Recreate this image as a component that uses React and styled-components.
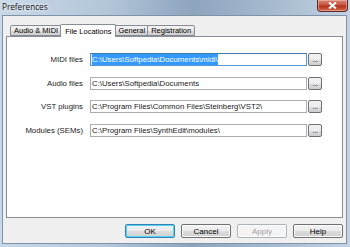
import React from "react";
import styled, { createGlobalStyle } from "styled-components";

const GlobalStyle = createGlobalStyle`
  html, body {
    margin: 0;
    padding: 0;
    background: #8aa3bd;
  }
  * {
    box-sizing: border-box;
  }
`;

const Window = styled.div`
  width: 350px;
  height: 247px;
  display: flex;
  flex-direction: column;
  background: linear-gradient(90deg, #c9d8e8 0%, #b4c6da 30%, #8ea5be 55%, #a9bcd1 80%, #c2d2e3 100%);
  font-family: "Liberation Sans", Arial, sans-serif;
  font-size: 7.8px;
  color: #000;
  overflow: hidden;
`;

const TitleBar = styled.div`
  height: 15px;
  display: flex;
  align-items: flex-start;
  justify-content: space-between;
  padding-left: 2px;
  padding-right: 2px;
`;

const Title = styled.div`
  font-family: "Open Sans", "Liberation Sans", sans-serif;
  font-size: 8.2px;
  line-height: 14px;
  color: #111;
  text-shadow: 0 0 6px rgba(255, 255, 255, 0.9), 0 0 3px rgba(255, 255, 255, 0.9);
`;

const CloseButton = styled.div`
  width: 31px;
  height: 12px;
  display: flex;
  align-items: center;
  justify-content: center;
  border: 1px solid #5c2a24;
  border-top: none;
  border-radius: 0 0 4px 4px;
  background: linear-gradient(180deg, #d58878 0%, #c8533f 45%, #b0321d 55%, #d46b4f 100%);
  box-shadow: inset 0 0 0 1px rgba(255, 200, 190, 0.5);
`;

const Client = styled.div`
  flex: 1;
  display: flex;
  flex-direction: column;
  margin: 0 3px 3px 2px;
  padding: 8px 3px 5px 3px;
  background: #f0f0f0;
  border: 1px solid #7f93a8;
`;

const TabStrip = styled.div`
  display: flex;
  align-items: flex-end;
  height: 12px;
  padding-left: 4px;
  position: relative;
  z-index: 1;
`;

const Tab = styled.div`
  height: ${({ $active }) => ($active ? "13px" : "11px")};
  margin-bottom: ${({ $active }) => ($active ? "-1px" : "0")};
  padding: ${({ $active }) => ($active ? "0 4px" : "0 3px")};
  display: flex;
  align-items: center;
  border: 1px solid #898c95;
  border-bottom: ${({ $active }) => ($active ? "none" : "1px solid #898c95")};
  border-radius: 2px 2px 0 0;
  background: ${({ $active }) =>
    $active ? "#ffffff" : "linear-gradient(180deg, #f3f3f3 0%, #ebebeb 50%, #dddddd 51%, #cfcfcf 100%)"};
  font-size: 7.5px;
  line-height: 9px;
  white-space: nowrap;
  position: relative;
  z-index: ${({ $active }) => ($active ? 2 : 1)};
  & + & {
    margin-left: ${({ $active }) => ($active ? "-2px" : "-1px")};
  }
`;

const Panel = styled.div`
  flex: 1;
  background: #ffffff;
  border: 1px solid #898c95;
  padding-top: 16px;
  display: grid;
  grid-template-columns: 76px 217px 14px;
  grid-auto-rows: 13px;
  column-gap: 7px;
  row-gap: 10.5px;
  align-content: start;
`;

const Label = styled.div`
  text-align: right;
  line-height: 13px;
  white-space: nowrap;
  color: #1a1a1a;
`;

const PathInput = styled.div`
  height: 13px;
  border: 1px solid ${({ $focused }) => ($focused ? "#5897d5" : "#abadb3")};
  border-top-color: ${({ $focused }) => ($focused ? "#3d7bad" : "#abadb3")};
  background: #ffffff;
  padding-left: 1px;
  display: flex;
  align-items: center;
  overflow: hidden;
  white-space: nowrap;
  line-height: 9px;
  color: #1a1a1a;
`;

const Selected = styled.span`
  background: #3399ff;
  color: #ffffff;
  padding: 1px 0;
`;

const Browse = styled.div`
  width: 14px;
  height: 13px;
  margin-left: -6px;
  border: 1px solid #707070;
  border-radius: 2px;
  background: linear-gradient(180deg, #f2f2f2 0%, #ebebeb 50%, #dddddd 51%, #cfcfcf 100%);
  display: flex;
  align-items: flex-end;
  justify-content: center;
  font-size: 8px;
  line-height: 7px;
  padding-bottom: 2px;
  color: #333;
  letter-spacing: -0.5px;
`;

const Footer = styled.div`
  display: flex;
  justify-content: flex-end;
  gap: 6px;
  margin-top: 6px;
`;

const Button = styled.div`
  width: 50px;
  height: 14px;
  display: flex;
  align-items: center;
  justify-content: center;
  border: 1px solid ${({ $default, $disabled }) => ($default ? "#3c7fb1" : $disabled ? "#adb2b5" : "#707070")};
  border-radius: 2px;
  background: ${({ $disabled }) =>
    $disabled ? "#f4f4f4" : "linear-gradient(180deg, #f2f2f2 0%, #ebebeb 50%, #dddddd 51%, #cfcfcf 100%)"};
  box-shadow: ${({ $default }) => ($default ? "inset 0 0 0 1px #48d6fd" : "inset 0 0 0 1px #fcfcfc")};
  color: ${({ $disabled }) => ($disabled ? "#a0a0a0" : "#000")};
  font-size: 8px;
  line-height: 9px;
`;

const rows = [
  { label: "MIDI files", path: "C:\\Users\\Softpedia\\Documents\\midi\\", focused: true },
  { label: "Audio files", path: "C:\\Users\\Softpedia\\Documents" },
  { label: "VST plugins", path: "C:\\Program Files\\Common Files\\Steinberg\\VST2\\" },
  { label: "Modules (SEMs)", path: "C:\\Program Files\\SynthEdit\\modules\\" },
];

const App = () => {
  return (
    <Window>
      <GlobalStyle />
      <TitleBar>
        <Title>Preferences</Title>
        <CloseButton>
          <svg width="9" height="7" viewBox="0 0 9 7">
            <path d="M1 0.5 L8 6.5 M8 0.5 L1 6.5" stroke="#fff" strokeWidth="2" />
          </svg>
        </CloseButton>
      </TitleBar>
      <Client>
        <TabStrip>
          <Tab>Audio &amp; MIDI</Tab>
          <Tab $active>File Locations</Tab>
          <Tab>General</Tab>
          <Tab>Registration</Tab>
        </TabStrip>
        <Panel>
          {rows.map((row) => (
            <React.Fragment key={row.label}>
              <Label>{row.label}</Label>
              <PathInput $focused={row.focused}>
                {row.focused ? <Selected>{row.path}</Selected> : row.path}
              </PathInput>
              <Browse>...</Browse>
            </React.Fragment>
          ))}
        </Panel>
        <Footer>
          <Button $default>OK</Button>
          <Button>Cancel</Button>
          <Button $disabled>Apply</Button>
          <Button>Help</Button>
        </Footer>
      </Client>
    </Window>
  );
};

export default App;
